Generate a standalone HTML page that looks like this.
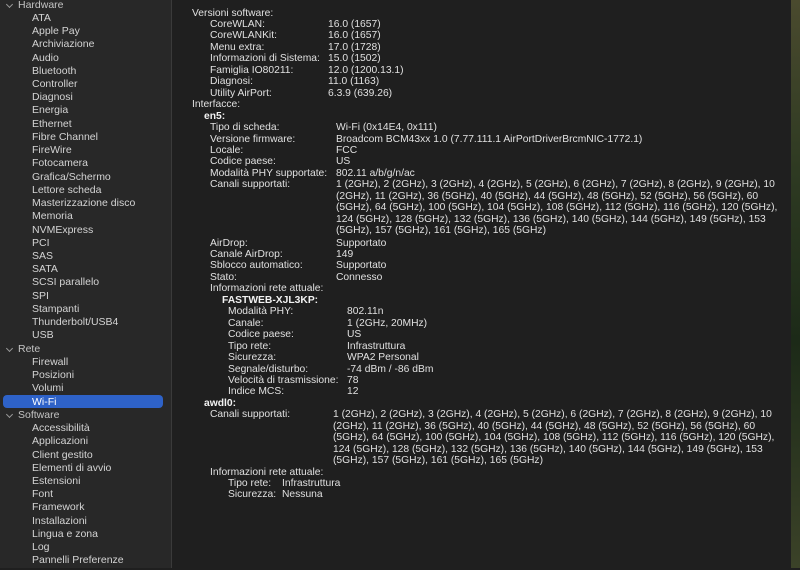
<!DOCTYPE html>
<html><head><meta charset="utf-8"><style>
*{margin:0;padding:0;box-sizing:border-box}
body{width:800px;height:568px;overflow:hidden;background:#1f1f1f;font-family:"Liberation Sans",sans-serif;color:#dcdcdc;position:relative}
#wall{position:absolute;left:791px;top:0;width:9px;height:568px;background:linear-gradient(180deg,#4a4a2e,#2e3a22 30%,#1c2a18 60%,#3b4228)}
#side{position:absolute;left:0;top:1.5px;width:172px;height:568px;background:#282828;border-right:1px solid #3a3a3a}
#sidebg{position:absolute;left:0;top:0;width:172px;height:568px;background:#282828;border-right:1px solid #3a3a3a}
#side div{position:absolute;height:13px;line-height:13px;font-size:10.5px;white-space:nowrap;color:#d4d4d4}
#side .h{left:18px;color:#c4c4c4}
#side .h:before{content:"";position:absolute;left:-11px;top:3px;width:4px;height:4px;border-right:1px solid #999;border-bottom:1px solid #999;transform:rotate(45deg)}
#side .i{left:32px}
#sel{position:absolute;left:3px;top:393.5px;width:160px;height:13px;background:#2e62c8;border-radius:4px}
#main{position:absolute;left:0;top:1px}
#main div{position:absolute;font-size:10.3px;line-height:11px;white-space:nowrap;color:#e0e0e0}
b{font-weight:bold;color:#f2f2f2}
</style></head><body>
<div id="wall"></div>
<div id="sidebg"></div>
<div id="side" style="background:none;border:none">
<div id="sel"></div>
<div class="h" style="top:-3px">Hardware</div>
<div class="i" style="top:10px">ATA</div>
<div class="i" style="top:23.5px">Apple Pay</div>
<div class="i" style="top:36.7px">Archiviazione</div>
<div class="i" style="top:50px">Audio</div>
<div class="i" style="top:63.2px">Bluetooth</div>
<div class="i" style="top:76.4px">Controller</div>
<div class="i" style="top:89.7px">Diagnosi</div>
<div class="i" style="top:102.9px">Energia</div>
<div class="i" style="top:116.1px">Ethernet</div>
<div class="i" style="top:129.4px">Fibre Channel</div>
<div class="i" style="top:142.6px">FireWire</div>
<div class="i" style="top:155.8px">Fotocamera</div>
<div class="i" style="top:169.1px">Grafica/Schermo</div>
<div class="i" style="top:182.3px">Lettore scheda</div>
<div class="i" style="top:195.5px">Masterizzazione disco</div>
<div class="i" style="top:208.8px">Memoria</div>
<div class="i" style="top:222px">NVMExpress</div>
<div class="i" style="top:235.2px">PCI</div>
<div class="i" style="top:248.5px">SAS</div>
<div class="i" style="top:261.7px">SATA</div>
<div class="i" style="top:274.9px">SCSI parallelo</div>
<div class="i" style="top:288.2px">SPI</div>
<div class="i" style="top:301.4px">Stampanti</div>
<div class="i" style="top:314.6px">Thunderbolt/USB4</div>
<div class="i" style="top:327.9px">USB</div>
<div class="h" style="top:341.1px">Rete</div>
<div class="i" style="top:354.3px">Firewall</div>
<div class="i" style="top:367.6px">Posizioni</div>
<div class="i" style="top:380.8px">Volumi</div>
<div class="i" style="top:394px;color:#fff">Wi-Fi</div>
<div class="h" style="top:407.3px">Software</div>
<div class="i" style="top:420.5px">Accessibilità</div>
<div class="i" style="top:433.8px">Applicazioni</div>
<div class="i" style="top:447px">Client gestito</div>
<div class="i" style="top:460.2px">Elementi di avvio</div>
<div class="i" style="top:473.5px">Estensioni</div>
<div class="i" style="top:486.7px">Font</div>
<div class="i" style="top:499.9px">Framework</div>
<div class="i" style="top:513.2px">Installazioni</div>
<div class="i" style="top:526.4px">Lingua e zona</div>
<div class="i" style="top:539.6px">Log</div>
<div class="i" style="top:552.9px">Pannelli Preferenze</div>
</div>
<div id="main">
<div style="left:192px;top:6.5px">Versioni software:</div>
<div style="left:210px;top:18px">CoreWLAN:</div><div style="left:328px;top:18px">16.0 (1657)</div>
<div style="left:210px;top:29.4px">CoreWLANKit:</div><div style="left:328px;top:29.4px">16.0 (1657)</div>
<div style="left:210px;top:40.9px">Menu extra:</div><div style="left:328px;top:40.9px">17.0 (1728)</div>
<div style="left:210px;top:52.3px">Informazioni di Sistema:</div><div style="left:328px;top:52.3px">15.0 (1502)</div>
<div style="left:210px;top:63.8px">Famiglia IO80211:</div><div style="left:328px;top:63.8px">12.0 (1200.13.1)</div>
<div style="left:210px;top:75.2px">Diagnosi:</div><div style="left:328px;top:75.2px">11.0 (1163)</div>
<div style="left:210px;top:86.7px">Utility AirPort:</div><div style="left:328px;top:86.7px">6.3.9 (639.26)</div>
<div style="left:192px;top:98.1px">Interfacce:</div>
<div style="left:204px;top:109.6px"><b>en5:</b></div>
<div style="left:210px;top:121px">Tipo di scheda:</div><div style="left:336px;top:121px">Wi-Fi  (0x14E4, 0x111)</div>
<div style="left:210px;top:132.5px">Versione firmware:</div><div style="left:336px;top:132.5px">Broadcom BCM43xx 1.0 (7.77.111.1 AirPortDriverBrcmNIC-1772.1)</div>
<div style="left:210px;top:143.9px">Locale:</div><div style="left:336px;top:143.9px">FCC</div>
<div style="left:210px;top:155.4px">Codice paese:</div><div style="left:336px;top:155.4px">US</div>
<div style="left:210px;top:166.8px">Modalità PHY supportate:</div><div style="left:336px;top:166.8px">802.11 a/b/g/n/ac</div>
<div style="left:210px;top:178.3px">Canali supportati:</div>
<div style="left:336px;top:178.3px;line-height:11.45px">1 (2GHz), 2 (2GHz), 3 (2GHz), 4 (2GHz), 5 (2GHz), 6 (2GHz), 7 (2GHz), 8 (2GHz), 9 (2GHz), 10<br>(2GHz), 11 (2GHz), 36 (5GHz), 40 (5GHz), 44 (5GHz), 48 (5GHz), 52 (5GHz), 56 (5GHz), 60<br>(5GHz), 64 (5GHz), 100 (5GHz), 104 (5GHz), 108 (5GHz), 112 (5GHz), 116 (5GHz), 120 (5GHz),<br>124 (5GHz), 128 (5GHz), 132 (5GHz), 136 (5GHz), 140 (5GHz), 144 (5GHz), 149 (5GHz), 153<br>(5GHz), 157 (5GHz), 161 (5GHz), 165 (5GHz)</div>
<div style="left:210px;top:236.5px">AirDrop:</div><div style="left:336px;top:236.5px">Supportato</div>
<div style="left:210px;top:248px">Canale AirDrop:</div><div style="left:336px;top:248px">149</div>
<div style="left:210px;top:259.4px">Sblocco automatico:</div><div style="left:336px;top:259.4px">Supportato</div>
<div style="left:210px;top:270.9px">Stato:</div><div style="left:336px;top:270.9px">Connesso</div>
<div style="left:210px;top:282.3px">Informazioni rete attuale:</div>
<div style="left:222px;top:293.8px"><b>FASTWEB-XJL3KP:</b></div>
<div style="left:228px;top:305.2px">Modalità PHY:</div><div style="left:347px;top:305.2px">802.11n</div>
<div style="left:228px;top:316.7px">Canale:</div><div style="left:347px;top:316.7px">1 (2GHz, 20MHz)</div>
<div style="left:228px;top:328.1px">Codice paese:</div><div style="left:347px;top:328.1px">US</div>
<div style="left:228px;top:339.6px">Tipo rete:</div><div style="left:347px;top:339.6px">Infrastruttura</div>
<div style="left:228px;top:351px">Sicurezza:</div><div style="left:347px;top:351px">WPA2 Personal</div>
<div style="left:228px;top:362.5px">Segnale/disturbo:</div><div style="left:347px;top:362.5px">-74 dBm / -86 dBm</div>
<div style="left:228px;top:373.9px">Velocità di trasmissione:</div><div style="left:347px;top:373.9px">78</div>
<div style="left:228px;top:385.4px">Indice MCS:</div><div style="left:347px;top:385.4px">12</div>
<div style="left:204px;top:396.8px"><b>awdl0:</b></div>
<div style="left:210px;top:408.3px">Canali supportati:</div>
<div style="left:333px;top:408.3px;line-height:11.45px">1 (2GHz), 2 (2GHz), 3 (2GHz), 4 (2GHz), 5 (2GHz), 6 (2GHz), 7 (2GHz), 8 (2GHz), 9 (2GHz), 10<br>(2GHz), 11 (2GHz), 36 (5GHz), 40 (5GHz), 44 (5GHz), 48 (5GHz), 52 (5GHz), 56 (5GHz), 60<br>(5GHz), 64 (5GHz), 100 (5GHz), 104 (5GHz), 108 (5GHz), 112 (5GHz), 116 (5GHz), 120 (5GHz),<br>124 (5GHz), 128 (5GHz), 132 (5GHz), 136 (5GHz), 140 (5GHz), 144 (5GHz), 149 (5GHz), 153<br>(5GHz), 157 (5GHz), 161 (5GHz), 165 (5GHz)</div>
<div style="left:210px;top:465.5px">Informazioni rete attuale:</div>
<div style="left:228px;top:477px">Tipo rete:</div><div style="left:282px;top:477px">Infrastruttura</div>
<div style="left:228px;top:488.4px">Sicurezza:</div><div style="left:282px;top:488.4px">Nessuna</div>
</div>
</body></html>
